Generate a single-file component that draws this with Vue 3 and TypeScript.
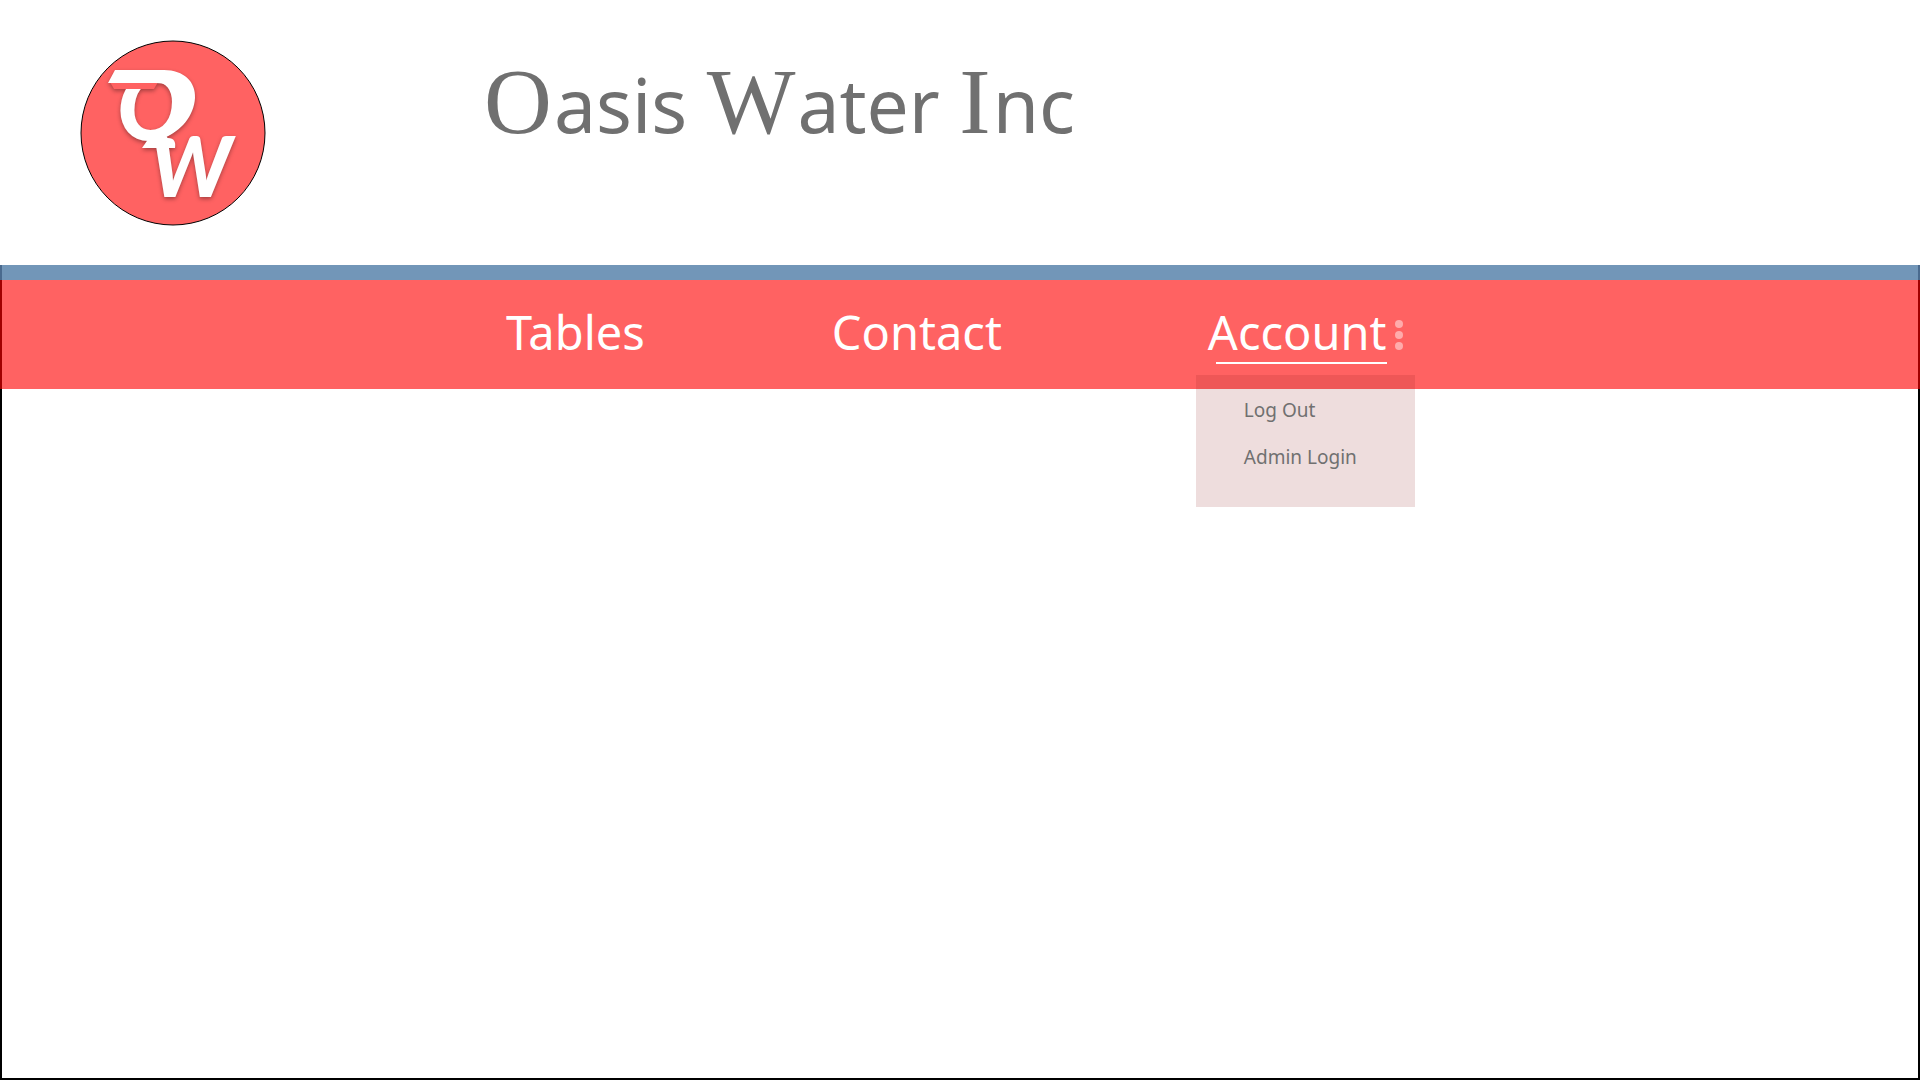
<script setup lang="ts">
import { ref } from 'vue'

interface Entry {
  label: string
  href: string
}

const words: string[] = ['Oasis', 'Water', 'Inc']
const accountLinks: Entry[] = [
  { label: 'Log Out', href: '#logout' },
  { label: 'Admin Login', href: '#admin' },
]
const menuOpen = ref(true)
</script>

<template>
  <div class="page">
    <header class="header">
      <a class="logo" href="#home" aria-label="Oasis Water Inc home">
        <svg viewBox="0 0 186 186" width="186" height="186">
          <circle cx="93" cy="93" r="92" fill="#ff6262" stroke="#000" stroke-width="1" />
          <g class="monogram" fill="#fff">
            <text>
              <tspan x="37" y="100" font-size="94">O</tspan><tspan x="70" y="157" font-size="84">W</tspan>
            </text>
            <path d="M30 42H78L74 49H34Z" fill="#ff6262" />
            <path d="M35 30H84C104 30 116 42 115 58C114 76 101 91 84 98L80 90C91 80 98 66 94 54C91 46 85 43 76 43H28Z" />
            <path d="M69 98H88C94 98 96 102 95 108H62Z" />
          </g>
        </svg>
      </a>
      <h1 class="title">
        <template v-for="(word, i) in words" :key="word"
          ><span class="cap">{{ word[0] }}</span
          >{{ word.slice(1) }}{{ i < words.length - 1 ? ' ' : '' }}</template
        >
      </h1>
    </header>
    <div class="stripe"></div>
    <nav class="nav">
      <a class="item" href="#tables">Tables</a>
      <a class="item" href="#contact">Contact</a>
      <div class="account">
        <button class="item toggle" type="button" :aria-expanded="menuOpen" @click="menuOpen = !menuOpen">
          <span class="label">Account</span>
          <svg class="dots" viewBox="0 -5 8 35" width="8" height="35" fill="#ffabab">
            <circle cx="4" cy="4" r="4" />
            <circle cx="4" cy="15" r="4" />
            <circle cx="4" cy="26" r="4" />
          </svg>
        </button>
        <ul v-if="menuOpen" class="menu">
          <li v-for="link in accountLinks" :key="link.label">
            <a :href="link.href">{{ link.label }}</a>
          </li>
        </ul>
      </div>
    </nav>
    <main class="content"></main>
  </div>
</template>

<style>
body {
  margin: 0;
  background: #fff;
}
</style>

<style scoped>
.page {
  box-sizing: border-box;
  min-height: 100vh;
  display: flex;
  flex-direction: column;
  font-family: 'Segoe UI', 'Noto Sans', 'Open Sans', sans-serif;
}
.header {
  display: flex;
  align-items: flex-start;
  gap: 218px;
  padding: 40px 80px 39px;
}
.logo {
  display: block;
  height: 186px;
}
.logo svg {
  display: block;
}
.monogram {
  font-family: Lato, sans-serif;
  font-weight: 900;
  font-style: italic;
  filter: drop-shadow(0 2px 2px rgba(0, 0, 0, 0.35));
}
.title {
  margin: 14px 0 0;
  font-size: 75px;
  line-height: 100px;
  font-weight: 400;
  color: #707070;
  white-space: nowrap;
}
.cap {
  margin-right: 2px;
  font-family: 'Liberation Serif', serif;
  font-size: 94px;
  line-height: 0;
}
.stripe {
  height: 15px;
  background: #7296b8;
  border: solid #4a6a8e;
  border-width: 0 2px;
}
.nav {
  display: flex;
  padding: 20px 0 25px 504px;
  background: #ff6262;
  border: solid #a00000;
  border-width: 0 2px;
  gap: 187px;
}
.item {
  font-size: 47px;
  line-height: 64px;
  color: #fff;
  text-decoration: none;
}
.account {
  position: relative;
  margin-left: 19px;
}
.toggle {
  display: flex;
  align-items: center;
  gap: 8px;
  padding: 0;
  border: 0;
  background: none;
  font-family: inherit;
  cursor: pointer;
}
.label {
  height: 64px;
  background: linear-gradient(#fff, #fff) right bottom / calc(100% - 8px) 2px no-repeat;
}
.menu {
  position: absolute;
  top: 75px;
  left: -12px;
  box-sizing: border-box;
  width: 219px;
  height: 132px;
  margin: 0;
  padding: 12px 0 0 48px;
  list-style: none;
  background: rgba(140, 30, 30, 0.15);
}
.menu a {
  display: block;
  font-size: 19px;
  line-height: 47px;
  color: #707070;
  text-decoration: none;
}
.content {
  flex: 1;
  border: 2px solid #000;
  border-top: 0;
}
</style>
